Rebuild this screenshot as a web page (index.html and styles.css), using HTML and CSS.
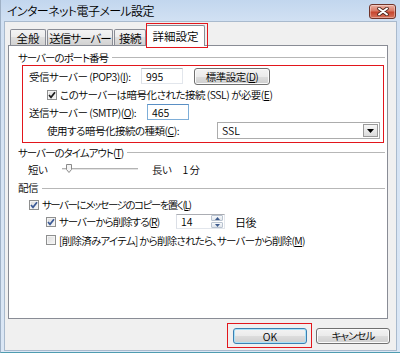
FILE: index.html
```html
<!DOCTYPE html>
<html lang="ja">
<head>
    <meta charset="UTF-8">
    <meta name="viewport" content="width=device-width, initial-scale=1.0">
    <title>インターネット電子メール設定</title>
    <link rel="stylesheet" href="styles.css">
</head>
<body>
<div class="window">
    <header class="titlebar">
        <span class="title">インターネット電子メール設定</span>
        <span class="close">
            <svg width="12" height="9" viewBox="0 0 12 9">
                <path d="M2 1.5 L10 7.5 M10 1.5 L2 7.5" stroke="#4b241c" stroke-width="3.6" stroke-linecap="round"/>
                <path d="M2 1.5 L10 7.5 M10 1.5 L2 7.5" stroke="#fff" stroke-width="2" stroke-linecap="round"/>
            </svg>
        </span>
    </header>

    <div class="dialog">
        <ul class="tabs">
            <li class="tab t1">全般</li>
            <li class="tab t2">送信サーバー</li>
            <li class="tab t3">接続</li>
            <li class="tab t4 active">詳細設定</li>
        </ul>

        <section class="panel">
            <div class="group"><span class="narrow">サーバーのポート番号</span></div>

            <div class="mark">
                <div class="row r1">
                    <span class="lbl lbl-pop">受信サーバー (POP3)(<u>I</u>):</span>
                    <span class="field f-port">995</span>
                    <span class="btn btn-std">標準設定(<u>D</u>)</span>
                </div>
                <div class="row r2">
                    <span class="chk on dark"><svg width="8" height="8" viewBox="0 0 8 8"><path d="M1 4 L3 6.3 L7 1.2" fill="none" stroke-width="1.7"/></svg></span>
                    <span>このサーバーは暗号化された接続 (SSL) が必要(<u>E</u>)</span>
                </div>
                <div class="row r3">
                    <span class="lbl lbl-smtp">送信サーバー (SMTP)(<u>O</u>):</span>
                    <span class="field f-port focus">465</span>
                </div>
                <div class="row r4">
                    <span class="lbl lbl-enc">使用する暗号化接続の種類(<u>C</u>):</span>
                    <span class="select">
                        <span class="select-val">SSL</span>
                        <span class="drop"><svg width="7" height="4" viewBox="0 0 7 4"><path d="M0 0 H7 L3.5 4 Z" fill="#000"/></svg></span>
                    </span>
                </div>
            </div>

            <div class="group g2"><span class="narrow">サーバーのタイムアウト(<u>T</u>)</span></div>
            <div class="row slide-row">
                <span class="s-short">短い</span>
                <span class="slider">
                    <svg class="thumb" width="6" height="9" viewBox="0 0 6 9"><path d="M0.5 0.5 H5.5 V5.5 L3 8.5 L0.5 5.5 Z" fill="#f4f4f4" stroke="#8a8a8a"/></svg>
                </span>
                <span class="s-long">長い</span>
                <span class="s-min">1 分</span>
            </div>

            <div class="group g3"><span>配信</span></div>
            <div class="row c1">
                <span class="chk on"><svg width="8" height="8" viewBox="0 0 8 8"><path d="M1 4 L3 6.3 L7 1.2" fill="none" stroke-width="1.7"/></svg></span>
                <span class="narrower">サーバーにメッセージのコピーを置く(<u>L</u>)</span>
            </div>
            <div class="row c2">
                <span class="chk on"><svg width="8" height="8" viewBox="0 0 8 8"><path d="M1 4 L3 6.3 L7 1.2" fill="none" stroke-width="1.7"/></svg></span>
                <span class="lbl-del narrow">サーバーから削除する(<u>R</u>)</span>
                <span class="field f-days">
                    <span class="days-val">14</span>
                    <span class="spin">
                        <span class="spin-btn"><svg width="5" height="3" viewBox="0 0 5 3"><path d="M0 3 H5 L2.5 0 Z" fill="#3d5a8c"/></svg></span>
                        <span class="spin-btn"><svg width="5" height="3" viewBox="0 0 5 3"><path d="M0 0 H5 L2.5 3 Z" fill="#3d5a8c"/></svg></span>
                    </span>
                </span>
                <span class="after">日後</span>
            </div>
            <div class="row c3">
                <span class="chk"></span>
                <span class="semi">[削除済みアイテム] から削除されたら、サーバーから削除(<u>M</u>)</span>
            </div>
        </section>

        <footer class="buttons">
            <span class="ok-mark"><span class="btn btn-ok">OK</span></span>
            <span class="btn btn-cancel narrow">キャンセル</span>
        </footer>
    </div>
</div>
</body>
</html>
```

FILE: styles.css
```css
*,
*::after,
*::before{
    box-sizing: border-box;
    margin: 0;
    padding: 0;
}
body{
    width: 400px;
    height: 353px;
    overflow: hidden;
    font-family: "Noto Sans CJK JP", "Noto Sans", sans-serif;
    font-size: 10.5px;
    font-weight: 350;
    font-feature-settings: "palt";
    letter-spacing: -0.5px;
    color: #000;
    background: #d3e1f2;
}
u{
    text-underline-offset: 1px;
}
/* la fuente de Windows tiene kana más estrechos */
.narrow{ letter-spacing: -1px; }
.narrower{ letter-spacing: -1.5px; }
.semi{ letter-spacing: -0.75px; }

/* marco de la ventana */
.window{
    height: 353px;
    display: flex;
    flex-direction: column;
    background: linear-gradient(#c2d6ee, #d2e1f3 22px, #dbe7f5);
    border-left: 1px solid #9fb1c6;
    border-bottom: 1px solid #4f9cb0;
}
.titlebar{
    height: 21px;
    display: flex;
    align-items: center;
    justify-content: space-between;
    padding: 0 4px 0 6px;
}
.title{
    font-size: 12px;
    letter-spacing: -0.6px;
}
.close{
    width: 27px;
    height: 15px;
    margin-top: 2px;
    display: flex;
    align-items: center;
    justify-content: center;
    border: 1px solid #70342a;
    border-radius: 3px;
    background: linear-gradient(#eab0a3, #d97a66 45%, #c6462f 55%, #d6735c);
    box-shadow: inset 0 0 0 1px rgba(255, 255, 255, 0.35);
}

.dialog{
    flex: 1;
    margin: 0 3px 1px 3px;
    border: 1px solid #a9bacd;
    background: #f0f0f0;
    display: flex;
    flex-direction: column;
    padding: 3px 0 0 3px;
}

/* pestañas */
.tabs{
    list-style: none;
    display: flex;
    align-items: flex-end;
    height: 20px;
    margin-left: 2px;
    font-size: 11.5px;
}
.tab{
    height: 16px;
    margin-right: 1px;
    display: flex;
    align-items: center;
    justify-content: center;
    border: 1px solid #898c95;
    border-bottom: none;
    border-radius: 2px 2px 0 0;
    background: linear-gradient(#f4f4f4, #ebebeb 50%, #dedede 50%, #d2d2d2);
}
.t1{ width: 36px; letter-spacing: 0; }
.t2{ width: 66px; letter-spacing: -1px; }
.t3{ width: 32px; margin-right: 0; }
.t4{ width: 59px; letter-spacing: 0; }
.tab.active{
    position: relative;
    z-index: 1;
    height: 21px;
    margin-bottom: -1px;
    background: #fff;
}
.tab.active::after{
    content: "";
    position: absolute;
    top: -3px;
    left: -1px;
    right: -4px;
    bottom: -2px;
    border: 1px solid #e2161c;
}

/* panel */
.panel{
    height: 274px;
    margin-right: 8px;
    padding: 3px 2px 0 9px;
    background: #fff;
    border: 1px solid #898c95;
}
.group{
    height: 16px;
    display: flex;
    align-items: center;
    gap: 4px;
}
.group::after{
    content: "";
    flex: 1;
    height: 1px;
    background: #b7b7b7;
    margin-top: 1px;
}
.g2{ margin-top: 1px; }
.g3{ margin-top: 2px; height: 17px; }

.mark{
    height: 78px;
    margin: 0 1px 0 4px;
    padding: 1px 0 0 6px;
    border: 1px solid #e2161c;
}
.row{
    display: flex;
    align-items: center;
}
.r1{ height: 18px; }
.r2{ height: 19px; padding-left: 18px; }
.r3{ height: 16px; }
.r4{ height: 19px; margin-top: 1px; padding-left: 18px; }

.lbl-pop{ width: 112px; }
.lbl-smtp{ width: 118px; }
.lbl-enc{ width: 170px; }

.field{
    height: 16px;
    display: flex;
    align-items: center;
    padding-left: 4px;
    background: #fff;
    border: 1px solid #e2e6ec;
    border-top-color: #abadb3;
    border-left-color: #dbdfe6;
    letter-spacing: 0;
}
.f-port{ width: 42px; }
.field.focus{
    border-color: #7eaed8;
    border-top-color: #5a8fc4;
}

.btn{
    display: flex;
    align-items: center;
    justify-content: center;
    border: 1px solid #707070;
    border-radius: 3px;
    background: linear-gradient(#f3f3f3, #ebebeb 50%, #dddddd 50%, #cfcfcf);
    box-shadow: inset 0 0 0 1px #fbfbfb;
}
.btn-std{
    width: 76px;
    height: 17px;
    margin-left: 11px;
}

.chk{
    width: 10px;
    height: 10px;
    margin-right: 3px;
    display: flex;
    align-items: center;
    justify-content: center;
    border: 1px solid #8e8f8f;
    background: linear-gradient(135deg, #dcdcdc, #f7f7f7);
    box-shadow: inset 0 0 0 1px #f4f4f4;
}
.chk svg{
    stroke: #3b5a96;
}
.chk.dark svg{
    stroke: #1c1c1c;
}

.select{
    width: 163px;
    height: 17px;
    display: flex;
    align-items: center;
    justify-content: space-between;
    padding: 0 1px 0 4px;
    background: #fff;
    border: 1px solid #acacac;
    letter-spacing: 0;
}
.drop{
    width: 15px;
    height: 13px;
    display: flex;
    align-items: center;
    justify-content: center;
    border: 1px solid #9a9a9a;
    background: linear-gradient(#f6f6f6, #dcdcdc);
}

/* tiempo de espera */
.slide-row{
    height: 16px;
    margin-top: 1px;
    padding-left: 10px;
}
.s-short{ width: 34px; }
.slider{
    position: relative;
    width: 76px;
    height: 3px;
    border-top: 1px solid #b3b3b3;
    border-bottom: 1px solid #fff;
    background: #e4e4e4;
}
.thumb{
    position: absolute;
    left: 4px;
    top: -5px;
}
.s-long{ margin-left: 14px; }
.s-min{ margin-left: 11px; }

/* entrega */
.c1{ height: 17px; padding-left: 11px; }
.c2{ height: 17px; padding-left: 28px; }
.c3{ height: 16px; margin-top: 2px; padding-left: 28px; }
.lbl-del{ width: 117px; }
.f-days{
    width: 49px;
    height: 15px;
    justify-content: space-between;
    padding-right: 1px;
}
.spin{
    width: 12px;
    display: flex;
    flex-direction: column;
    gap: 1px;
}
.spin-btn{
    height: 6px;
    display: flex;
    align-items: center;
    justify-content: center;
    border: 1px solid #b9c3d0;
    border-radius: 1px;
    background: linear-gradient(#f7f9fb, #e1e6ec);
}
.after{
    margin-left: 10px;
    font-size: 11px;
}

/* botones */
.buttons{
    display: flex;
    align-items: center;
    justify-content: flex-end;
    margin: 4px 6px 0 0;
}
.ok-mark{
    padding: 4px 4px 3px 5px;
    border: 1px solid #e2161c;
}
.btn-ok,
.btn-cancel{
    width: 74px;
    height: 16px;
}
.btn-ok{
    border-color: #3c7fb1;
    box-shadow: inset 0 0 0 1px #a8e2f8;
    letter-spacing: 0;
}
.btn-cancel{
    margin-left: 4px;
}
```
